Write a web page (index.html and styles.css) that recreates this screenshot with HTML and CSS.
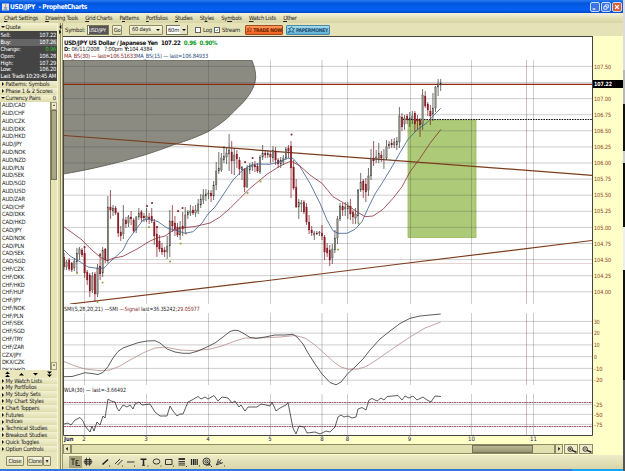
FILE: index.html
```
<!DOCTYPE html>
<html lang="en">
<head>
    <meta charset="UTF-8">
    <meta name="viewport" content="width=device-width, initial-scale=1.0">
    <title>USD/JPY - ProphetCharts</title>
    <link rel="stylesheet" href="styles.css">
</head>
<body>
    <div class="window">
        <div class="titlebar">
            <svg class="app-icon" viewBox="0 0 8 8"><rect width="8" height="8" fill="#e8e6e0"/><path d="M4.5 0.5C3 2 5 2.5 3.8 4" stroke="#c64" fill="none" stroke-width=".8"/><path d="M2 4.5h4M2.5 6h3.2M1.5 7.2h5" stroke="#446a96" stroke-width=".7"/></svg>
            <span class="title">USD/JPY&nbsp; - ProphetCharts</span>
            <div class="win-buttons">
                <span class="win-btn"><svg viewBox="0 0 10 10"><path d="M2 7.5h3.5" stroke="#fff" stroke-width="1.5"/></svg></span>
                <span class="win-btn"><svg viewBox="0 0 10 10"><path d="M4 4V2.3h4v3.5H6.5M2.2 4.5h4v3.3h-4z" stroke="#fff" fill="none"/></svg></span>
                <span class="win-btn close"><svg viewBox="0 0 10 10"><path d="M2.5 2.5l5 5M7.5 2.5l-5 5" stroke="#fff" stroke-width="1.4"/></svg></span>
            </div>
        </div>
        <div class="menubar">
            <span><u>C</u>hart Settings</span>
            <span><u>D</u>rawing Tools</span>
            <span><u>G</u>rid Charts</span>
            <span>P<u>a</u>tterns</span>
            <span><u>P</u>ortfolios</span>
            <span><u>S</u>tudies</span>
            <span>St<u>y</u>les</span>
            <span>Sy<u>m</u>bols</span>
            <span><u>W</u>atch Lists</span>
            <span><u>O</u>ther</span>
        </div>
        <div class="main">
            <div class="sidebar">
                <div class="head"><i class="down"></i>Quote</div>
                <div class="quote">
                    <div><span>Sell:</span><span>107.22</span></div>
                    <div class="alt"><span>Buy:</span><span>107.26</span></div>
                    <div><span>Change:</span><span class="up">0.96</span></div>
                    <div><span>Open:</span><span>106.28</span></div>
                    <div><span>High:</span><span>107.29</span></div>
                    <div><span>Low:</span><span>106.20</span></div>
                    <div><span>Last Trade</span><span>10:29:45 AM</span></div>
                </div>
                <div class="head"><i></i>Patterns: Symbols</div>
                <div class="head"><i></i>Phase 1 &amp; 2 Scores</div>
                <div class="head"><i class="down"></i>Currency Pairs<b>0</b></div>
                <div class="pairs">
                    <ul id="pairList"></ul>
                    <div class="vscroll">
                        <span class="arrow-btn"><svg viewBox="0 0 7 8"><path d="M1.5 5h4l-2-2.2z"/></svg></span>
                        <span class="thumb"></span>
                        <span class="rail"></span>
                        <span class="arrow-btn"><svg viewBox="0 0 7 8"><path d="M1.5 3h4l-2 2.2z"/></svg></span>
                    </div>
                </div>
                <div class="movers">
                    <svg viewBox="0 0 57 8"><path d="M5 4h5L7.5 1.5zM5 7h5L7.5 4.5zM19 5.5h5L21.5 3zM33 3h5l-2.5 2.5zM47 1.5h5L49.5 4zM47 4.5h5L49.5 7z"/></svg>
                </div>
                <div class="head low"><i></i>My Watch Lists</div>
                <div class="head low"><i></i>My Portfolios</div>
                <div class="head low"><i></i>My Study Sets</div>
                <div class="head low"><i></i>My Chart Styles</div>
                <div class="head low"><i></i>Chart Toppers</div>
                <div class="head low"><i></i>Futures</div>
                <div class="head low"><i></i>Indices</div>
                <div class="head low"><i></i>Technical Studies</div>
                <div class="head low"><i></i>Breakout Studies</div>
                <div class="head low"><i></i>Quick Toggles</div>
                <div class="head low"><i></i>Option Controls</div>
                <div class="side-buttons">
                    <span class="btn">Close</span>
                    <span class="btn clone">Clone</span><span class="btn drop">&#9662;</span>
                </div>
            </div>
            <div class="splitter">
                <svg viewBox="0 0 6 12"><path d="M4 1v5L1.5 3.5zM1.5 7v5L4 9.5z"/></svg>
            </div>
            <div class="content">
                <div class="toolbar">
                    <span class="lbl">Symbol:</span>
                    <span class="field symbol"><em>USD/JPY</em></span>
                    <span class="btn go">Go</span>
                    <span class="btn range">60 days <i></i></span>
                    <span class="field interval">60m <b><i></i></b></span>
                    <span class="check"></span><span class="log">Log</span>
                    <span class="check on"><svg viewBox="0 0 6 6"><path d="M1 3l1.5 1.5L5 1.3" stroke="#1d8a1d" fill="none"/></svg></span><span class="stream">Stream</span>
                    <span class="pill trade"><svg viewBox="0 0 8 8"><path d="M1 6.5L3.5 4 1.5 2.5h2L4.5.8l1 1.7h2L5.8 4.2l.7 2.3-2-1.3z"/></svg>TRADE NOW</span>
                    <span class="pill paper"><svg viewBox="0 0 8 8"><path d="M1 6.5L3.5 4 1.5 2.5h2L4.5.8l1 1.7h2L5.8 4.2l.7 2.3-2-1.3z"/></svg>PAPERMONEY</span>
                </div>
                <div class="chart-area">
                    <div class="legend">
                        <div class="name">USD/JPY US Dollar / Japanese Yen&nbsp; 107.22&nbsp; <span>0.96&nbsp; 0.90%</span></div>
                        <div class="date"><b>D:</b> 06/11/2008 &nbsp; 7:00pm <b>Y:</b>104.4384</div>
                        <div class="ma"><span class="red">MA_BS(30) — last=106.51633</span><span class="blue">MA_BS(15) — last=106.84933</span></div>
                    </div>
                    <svg id="chart" class="chart" viewBox="63 60 560 383">
                        <defs>
                            <clipPath id="pricePanel"><rect x="64" y="60" width="528" height="244"/></clipPath>
                        </defs>
                        <!-- axis strips -->
                        <rect x="592" y="60" width="31" height="383" fill="#ffffc8"/>
                        <rect x="63" y="436" width="560" height="7" fill="#ffffc8"/>
                        <path class="ellipse" clip-path="url(#pricePanel)" d="M60 60H251.7C254.5 66 255.7 72 255.7 77C255.5 86 250 95 241.7 104C234 111 229 117 225 120C219 125 214 128 208 131.7C197 137 186 141 175 144.3C165 148 156 151.5 146.3 154.5C131 159 115 163.5 100 166.7C88 169.5 76 172 60 174.5z"/>
                        <rect class="zone" x="408" y="120" width="68" height="117.5"/>
                        <g id="grid"></g>
                        <g clip-path="url(#pricePanel)">
                            <path class="faint" d="M64 263.5H592"/>
                            <path class="trend" d="M64 135.5L592 175.3M70 304L260 281.5L400 264L592 240.5"/>
                            <path class="last" d="M64 84.4H592"/>
                            <path class="support" d="M403 119.5H592"/>
                        </g>
                        <g id="candles"></g>
                        <g id="marks"></g>
                        <polyline id="ma15" class="ma15"/>
                        <polyline id="ma30" class="ma30"/>
                        <text x="64" y="311.3" textLength="54" lengthAdjust="spacingAndGlyphs" class="study">SMI(5,28,20,21) —SMI</text>
                        <text x="119.5" y="311.3" textLength="20" lengthAdjust="spacingAndGlyphs" class="study red">—Signal</text>
                        <text x="141" y="311.3" textLength="36" lengthAdjust="spacingAndGlyphs" class="study">last=36.35242;</text>
                        <text x="177.3" y="311.3" textLength="22.5" lengthAdjust="spacingAndGlyphs" class="study red">29.05977</text>
                        <polyline id="signal" class="signal"/>
                        <polyline id="smi" class="smi"/>
                        <text x="64" y="392.3" textLength="62" lengthAdjust="spacingAndGlyphs" class="study">WLR(30) — last=-3.66492</text>
                        <path class="bounds" d="M64 402.5H592M64 426.5H592"/>
                        <polyline id="wlr" class="smi"/>
                        <path class="frame" d="M63.5 60V435.5H592.5V60"/>
                        <rect x="593" y="80" width="30" height="8" fill="#000"/>
                        <text x="594" y="86.4" textLength="18" lengthAdjust="spacingAndGlyphs" class="price now">107.22</text>
                        <g id="labels"></g>
                    </svg>
                    <div class="hscroll">
                        <span class="arrow"><svg viewBox="0 0 8 10"><path d="M5 2.5v5L2.5 5z"/></svg></span>
                        <span class="track"><span class="thumb"></span></span>
                        <span class="arrow"><svg viewBox="0 0 8 10"><path d="M3 2.5v5L5.5 5z"/></svg></span>
                        <span class="zoom"><svg viewBox="0 0 15 10"><circle cx="5.5" cy="4.5" r="2.5"/><path d="M4.3 4.5h2.4M5.5 3.3v2.4"/><path d="M7.5 6l5 2" stroke-width="1.7"/></svg></span>
                        <span class="zoom"><svg viewBox="0 0 15 10"><circle cx="5.5" cy="4.5" r="2.5"/><path d="M4.3 4.5h2.4"/><path d="M7.5 6l5 2" stroke-width="1.7"/></svg></span>
                    </div>
                </div>
                <div class="drawbar">
                    <span class="tool grip"></span>
                    <span class="tool active"><svg viewBox="0 0 12 12"><path d="M2 3h4M4 3v6M7 4.5v5M7 4.5h2.5M7 7h2M7 9.5h4"/></svg></span>
                    <span class="tool"><svg viewBox="0 0 12 12"><path d="M3 3.5h6v4.5H3z" fill="#aaa78a"/><path d="M4.5 1.5v8.500M7.500 1.500v8.500M1.500 5.700h9" stroke-width=".7"/></svg></span>
                    <span class="tool gap"><svg viewBox="0 0 12 12"><path d="M2.5 8.5L8 3.5" stroke-width="1.6"/><path d="M9 10h1"/></svg></span>
                    <span class="tool"><svg viewBox="0 0 12 12"><path d="M2 8l5-5M4.5 9l5-5"/><path d="M9 10h1"/></svg></span>
                    <span class="tool"><svg viewBox="0 0 12 12"><path d="M2 6h7.5M9 10h1"/></svg></span>
                    <span class="tool"><svg viewBox="0 0 12 12"><path d="M2.5 3.2h6M5.5 3.2V9" stroke-width="1.5"/><path d="M4 9.3h3M9.5 10h1"/></svg></span>
                    <span class="tool"><svg viewBox="0 0 12 12"><ellipse cx="5.5" cy="5.5" rx="3.3" ry="2.6"/><path d="M9.5 10h1"/></svg></span>
                    <span class="tool"><svg viewBox="0 0 12 12"><path d="M2.5 3.5h6.5v5H2.5zM10 10h1"/></svg></span>
                    <span class="tool"><svg viewBox="0 0 12 12"><path d="M2.5 3h6.5" stroke-width="1.8"/><path d="M2.5 5.5h6.5M2.5 7.2h6.5M2.5 9h6.5M10 10.5h1"/></svg></span>
                    <span class="tool"><svg viewBox="0 0 12 12"><path d="M2.5 3v6M4.5 3v6M6.2 3v6M8.2 3v6M10 10h1" stroke-width="1.2"/></svg></span>
                    <span class="tool"><svg viewBox="0 0 12 12"><circle cx="5.5" cy="5.5" r="3.5"/><circle cx="5.5" cy="5.5" r="1.6"/><path d="M5.5 5.5l4 3.5H5M10 10.5h1"/></svg></span>
                    <span class="tool"><svg viewBox="0 0 12 12"><path d="M2.5 9l2-6M2.5 9L7.5 3.5M2.5 9l6.5-2.5M4.5 5.5l3 2M10 10h1" stroke-width=".8"/></svg></span>
                </div>
            </div>
        </div>
        <div class="taskbar"></div>
    </div>
    <div class="desktop"></div>
    <script src="script.js"></script>
</body>
</html>
```
FILE: styles.css
```
* {
    box-sizing: border-box;
}
body {
    margin: 0;
    width: 625px;
    height: 471px;
    overflow: hidden;
    display: flex;
    background: #ece9c8;
    font-family: "DejaVu Sans Condensed", "DejaVu Sans", sans-serif;
    font-stretch: condensed;
    font-size: 6.2px;
    color: #222;
}
svg {
    display: block;
}
.window {
    width: 623px;
    height: 471px;
    display: flex;
    flex-direction: column;
}
.desktop {
    width: 2px;
    background: linear-gradient(#dcdcdc 0 70px, #b8b8b8 70px 104px, #111 104px 151px, #ccc 151px 163px, #0c0c0c 163px 227px, #eee 227px 270px, #111 270px 380px, #555 380px);
}

/* title bar */
.titlebar {
    height: 13px;
    display: flex;
    align-items: center;
    padding: 0 1px 0 2px;
    background: linear-gradient(#2a7cf2, #0355dd 25%, #0560f5 75%, #0348c4);
    color: #fff;
}
.app-icon {
    width: 7px;
    height: 8px;
    margin-right: 1px;
}
.title {
    font-weight: bold;
    font-size: 6.7px;
    letter-spacing: -0.35px;
    white-space: nowrap;
}
.win-buttons {
    margin-left: auto;
    display: flex;
    gap: 1px;
}
.win-btn {
    width: 10px;
    height: 10px;
    border: 0.5px solid #c8dcff;
    border-radius: 2px;
    background: #3c74e4;
}
.win-btn.close {
    background: #dc5a38;
}

/* menu */
.menubar {
    height: 10px;
    display: flex;
    gap: 7.2px;
    padding: 1px 4px 0;
    line-height: 9px;
    white-space: nowrap;
    background: linear-gradient(#f4f2dc, #e4e1b8 50%, #d6d3a4);
    font-size: 5.9px;
    letter-spacing: -0.29px;
}
.menubar u {
    text-underline-offset: 0.5px;
    text-decoration-thickness: 0.5px;
}
.main {
    flex: 1;
    display: flex;
    min-height: 0;
}

/* left panel */
.sidebar {
    width: 57px;
    display: flex;
    flex-direction: column;
    background: #e9e6bc;
}
.head {
    height: 6.9px;
    line-height: 6.9px;
    display: flex;
    align-items: center;
    white-space: nowrap;
    font-size: 5.9px;
    letter-spacing: -0.22px;
    background: linear-gradient(#f3f1d2, #dfdcac);
}
.head:first-child {
    height: 8px;
}
.head.low {
    height: 6.8px;
}
.head i {
    width: 3px;
    margin: 0 1px 0 1.5px;
    border-left: 2.3px solid #111;
    border-top: 2px solid transparent;
    border-bottom: 2px solid transparent;
}
.head i.down {
    width: 4px;
    margin: 0 0.5px 0 1px;
    border-top: 2.5px solid #111;
    border-left: 2px solid transparent;
    border-right: 2px solid transparent;
    border-bottom: 0;
}
.head b {
    margin-left: auto;
    padding-right: 1px;
    font-weight: normal;
}
.quote {
    height: 50px;
    padding-top: 1px;
    background: #444;
    color: #fff;
}
.quote div {
    height: 6.9px;
    line-height: 6.9px;
    padding: 0 1px 0 0.5px;
    display: flex;
    justify-content: space-between;
    white-space: nowrap;
    font-size: 5.7px;
    letter-spacing: -0.2px;
}
.quote .alt {
    background: #666;
}
.quote .up {
    color: #2fc42f;
}
.pairs {
    height: 268.5px;
    display: flex;
    overflow: hidden;
    border-left: 1px solid #a5a286;
    background: #fff;
}
.pairs ul {
    flex: 1;
    margin: 0;
    padding: 0.5px 0 0 1px;
    list-style: none;
}
.pairs li {
    height: 7.8px;
    line-height: 7.8px;
    font-size: 5.8px;
    letter-spacing: -0.15px;
    white-space: nowrap;
}
.vscroll {
    width: 7px;
    display: flex;
    flex-direction: column;
    border-left: 0.5px solid #8a8760;
    background: #e8e5b5;
}
.arrow-btn {
    height: 8px;
    border: 0.5px solid #a5a27c;
    background: #f0edcc;
}
.vscroll .thumb {
    height: 70px;
    border: 0.5px solid #77745a;
    background: #a9a682;
}
.vscroll .rail {
    flex: 1;
}
.movers {
    height: 7.5px;
}
.movers svg {
    height: 8px;
}
.side-buttons {
    flex: 1;
    display: flex;
    align-items: center;
    padding: 0 5px 0 6px;
}
.btn {
    height: 10px;
    line-height: 9px;
    border: 0.5px solid #8d8a66;
    border-radius: 1px;
    background: linear-gradient(#f8f6e0, #e2dfb5);
    text-align: center;
    white-space: nowrap;
    font-size: 5.7px;
    letter-spacing: -0.2px;
}
.side-buttons .btn {
    width: 18px;
}
.side-buttons .clone {
    width: 16px;
    margin-left: 3px;
}
.side-buttons .drop {
    width: 8px;
}
.splitter {
    width: 6px;
    border-left: 1px solid #f8f6e0;
    border-right: 1px solid #99966c;
    background: linear-gradient(90deg, #dedbab 2px, #8e8b62 2px 2.7px, #eeebc4 2.7px);
}
.splitter svg {
    width: 5px;
    height: 12px;
}

/* toolbar */
.content {
    flex: 1;
    display: flex;
    flex-direction: column;
}
.toolbar {
    height: 13px;
    display: flex;
    align-items: center;
    padding-left: 2px;
    background: #e5e2b8;
    white-space: nowrap;
    font-size: 5.9px;
    letter-spacing: -0.2px;
}
.lbl {
    width: 22px;
}
.field {
    height: 10px;
    line-height: 8px;
    border: 0.5px solid #77745a;
    background: #fff;
    padding: 0.5px 1px;
}
.symbol {
    width: 22px;
    padding: 0.5px;
}
.symbol em {
    display: block;
    font-style: normal;
    font-size: 5.3px;
    letter-spacing: -0.2px;
    background: #555;
    color: #fff;
}
.go {
    width: 10px;
    margin-left: 3px;
}
.range {
    width: 34px;
    margin-left: 7px;
    padding: 0 2px;
    display: flex;
    align-items: center;
    justify-content: space-between;
}
.range i,
.interval i {
    border-top: 2.5px solid #111;
    border-left: 2px solid transparent;
    border-right: 2px solid transparent;
}
.interval {
    width: 22px;
    margin-left: 3px;
    display: flex;
    align-items: center;
    justify-content: space-between;
    padding-right: 0;
    font-size: 5.8px;
}
.interval b {
    width: 7px;
    height: 9px;
    display: flex;
    align-items: center;
    justify-content: center;
    background: #e8e5c0;
}
.check {
    width: 6px;
    height: 6px;
    margin: 0 2px 0 7px;
    border: 0.5px solid #666;
    background: #fff;
}
.log {
    width: 9px;
}
.check.on {
    margin-left: 2px;
}
.stream {
    width: 23px;
}
.pill {
    height: 10px;
    display: flex;
    align-items: center;
    border-radius: 1px;
    font-size: 5px;
    font-weight: bold;
    letter-spacing: -0.25px;
}
.pill svg {
    width: 8px;
    height: 8px;
    margin-right: 1px;
    fill: none;
    stroke: currentColor;
    stroke-width: 0.7;
}
.trade {
    width: 38px;
    border: 0.5px solid #a34a1c;
    background: linear-gradient(#ff9a5a, #f0601e);
    color: #6b2200;
}
.paper {
    width: 44px;
    margin-left: 3px;
    border: 0.5px solid #4a8aa8;
    background: linear-gradient(#a5dcee, #5fb0d4);
    color: #1d4e70;
}

/* chart */
.chart-area {
    width: 560px;
    height: 419px;
    display: flex;
    flex-direction: column;
    background: #ffffc8;
}
.legend {
    width: 530px;
    height: 24px;
    padding: 1.5px 0 0 1px;
    border: solid #444;
    border-width: 1px 1px 0 0;
    background: #fff;
    white-space: nowrap;
}
.legend div {
    height: 7.3px;
    line-height: 7.3px;
}
.legend .name {
    font-weight: bold;
    font-size: 6.1px;
    letter-spacing: -0.27px;
    color: #111;
}
.name span {
    color: #0d9a2a;
}
.legend .date {
    font-size: 5.7px;
    letter-spacing: -0.15px;
}
.legend .ma {
    font-size: 5.7px;
    letter-spacing: -0.2px;
}
.red {
    color: #8a1f1f;
}
.blue {
    color: #2c4c80;
}
.chart {
    width: 560px;
    height: 383px;
    background: #fff;
}
.ellipse {
    fill: #8b8b82;
    stroke: #55554c;
    stroke-width: 0.8;
}
.zone {
    fill: #adca78;
    stroke: #9bb95f;
    stroke-width: 0.8;
}
.grid {
    stroke: #404040;
    stroke-opacity: 0.29;
    stroke-width: 0.9;
    fill: none;
}
.session {
    stroke: #555;
    stroke-opacity: 0.17;
    stroke-width: 2;
}
.cursor {
    stroke: #a07080;
    stroke-opacity: 0.6;
    stroke-width: 0.8;
}
.faint {
    stroke: #c09090;
    stroke-opacity: 0.5;
    stroke-width: 0.8;
}
.trend {
    fill: none;
    stroke: #7c3c1c;
    stroke-width: 1.2;
}
.last {
    stroke: #8e2a14;
    stroke-width: 1.1;
}
.support {
    stroke: #111;
    stroke-width: 1.1;
    stroke-dasharray: 1.6 1;
}
.ma15,
.ma30,
.signal,
.smi {
    fill: none;
    stroke-width: 0.8;
    stroke-linejoin: round;
}
.ma15 {
    stroke: #3c5c90;
}
.ma30 {
    stroke: #8c3038;
}
.signal {
    stroke: #b88c8c;
}
.smi {
    stroke: #333;
}
.bounds {
    stroke: #803a50;
    stroke-width: 0.8;
    stroke-dasharray: 2 0.5;
}
.frame {
    fill: none;
    stroke: #444;
}
.study {
    font-size: 5.7px;
    fill: #222;
}
.study.red {
    fill: #8a1f1f;
}
.price {
    font-size: 5.8px;
    fill: #8a3a1c;
}
.price.now {
    fill: #fff;
    font-weight: bold;
}
.day {
    font-size: 6px;
    fill: #20206a;
    text-anchor: middle;
}
.month {
    font-weight: bold;
    text-anchor: start;
}

/* scroll bar under the chart */
.hscroll {
    height: 10px;
    margin-top: 1px;
    display: flex;
    width: 530px;
}
.arrow {
    width: 8px;
    border: 0.5px solid #8d8a66;
    background: #e8e5bc;
}
.track {
    flex: 1;
    display: flex;
    justify-content: flex-end;
    padding-right: 21px;
    border: 0.5px solid #8d8a66;
    background: #e3e0b0;
}
.track .thumb {
    width: 61px;
    border: 0.5px solid #77745a;
    background: linear-gradient(#bab796, #98956f);
}
.zoom {
    width: 14.5px;
    margin-left: 0.5px;
    border: 0.5px solid #8d8a66;
    background: #efecca;
}
.zoom svg {
    width: 14px;
    height: 9px;
    fill: none;
    stroke: #222;
    stroke-width: 1;
}

/* drawing tools */
.drawbar {
    flex: 1;
    display: flex;
    align-items: center;
    padding-left: 1px;
    background: linear-gradient(#eeebc9, #d9d6a8);
}
.tool {
    width: 12.7px;
    height: 12px;
}
.tool.grip {
    width: 5px;
    height: 10px;
    background: radial-gradient(#aaa780 0.6px, transparent 0.7px) 0 0 / 2px 2px;
}
.tool.active {
    background: #a5a27c;
}
.tool.gap {
    margin-left: 5.5px;
}
.tool svg {
    width: 12px;
    height: 12px;
    fill: none;
    stroke: #222;
    stroke-width: 0.9;
}
.taskbar {
    height: 2px;
    background: linear-gradient(90deg, #2f78dc 572px, #18a4ee 572px);
}
```
FILE: script.js
```
const NS = 'http://www.w3.org/2000/svg';

function add(parent, tag, attrs, text) {
    const el = document.createElementNS(NS, tag);
    for (const key in attrs) el.setAttribute(key, attrs[key]);
    if (text !== undefined) el.textContent = text;
    document.getElementById(parent).appendChild(el);
}

// symbol list
const pairs = {
    AUD: 'CAD CHF CZK DKK HKD JPY NOK NZD PLN SEK SGD USD ZAR',
    CAD: 'CHF DKK HKD JPY NOK PLN SEK SGD',
    CHF: 'CZK DKK HKD HUF JPY NOK PLN SEK SGD TRY ZAR',
    CZX: 'JPY',
    DKX: 'CZK HKD'
};
document.getElementById('pairList').innerHTML = Object.keys(pairs)
    .map(base => pairs[base].split(' ').map(q => `<li>${base}/${q}</li>`).join(''))
    .join('');

// grid: three panels share the same day lines
const panels = [[60, 304], [313, 385], [394, 435]];
const days = [84.5, 146.5, 208.5, 270.5, 347.5, 410.5, 471.5, 533.5];
panels.forEach(([top, bottom]) => {
    days.forEach(x => add('grid', 'path', { class: 'grid', d: `M${x} ${top}V${bottom}` }));
    add('grid', 'path', { class: 'session', d: `M322 ${top}V${bottom}` });
    add('grid', 'path', { class: 'cursor', d: `M526.5 ${top}V${bottom}` });
});

function level(y, label) {
    add('grid', 'path', { class: 'grid', d: `M64 ${y}H592` });
    if (label) add('labels', 'text', { class: 'price', x: 594, y: y + 2.1, textLength: label.length * 2.85, lengthAdjust: 'spacingAndGlyphs' }, label);
}
for (let i = 0; i <= 14; i++) {
    const price = (107.5 - i * 0.25).toFixed(2);
    level(66.4 + i * 16.1, price === '107.25' ? '' : price);
}
['30', '20', '10', '0', '-10', '-20'].forEach((t, i) => level(321.4 + i * 11.75, t));
['-25', '-50', '-75'].forEach((t, i) => level(404.4 + i * 10, t));

add('labels', 'text', { class: 'day month', x: 64, y: 440.8, textLength: 9.5, lengthAdjust: 'spacingAndGlyphs' }, 'Jun');
[[84, 2], [146, 3], [208, 4], [270, 5], [322, 8], [347.5, 8], [409.5, 9], [471.5, 10], [533.5, 11]]
    .forEach(([x, d]) => add('labels', 'text', { class: 'day', x: x, y: 440.8 }, d));

// hourly bars: high, low, open, close
const bars = [
    [253,270,257,267],[260,270,267,262],[258,271,260,269],[262,272,263,270],[258,271,268,261],[248,273,262,253],[247,260,254,249],[248,257,250,255],
    [247,278,253,273],[270,285,272,280],[273,297,275,291],[272,293,290,276],[272,302,274,294],[264,297,294,268],[253,280,266,274],[247,277,273,250],
    [248,263,249,260],[196,263,261,207],[190,219,207,210],[205,216,211,208],[206,215,208,213],[212,237,213,233],[226,241,232,236],[205,239,234,219],
    [217,228,220,224],[215,227,223,217],[211,225,217,219],[218,233,220,231],[216,233,230,217],[208,220,217,213],[210,222,212,218],[213,222,216,218],
    [208,222,219,216],[213,224,217,219],[208,223,216,221],[219,245,222,236],[226,257,234,247],[235,252,241,249],[243,255,248,252],[247,257,250,252],
    [236,259,252,246],[210,257,246,221],[205,232,221,226],[216,236,223,229],[223,237,227,235],[221,240,235,227],[212,236,226,229],[207,233,228,215],
    [210,219,215,212],[205,216,213,211],[206,215,210,213],[205,217,213,210],[199,214,211,204],[194,208,205,199],[189,204,200,195],[189,201,196,194],
    [190,199,194,193],[190,202,193,196],[181,200,196,185],[162,190,185,171],[152,174,171,168],[153,172,170,158],[146,163,160,156],[148,164,157,153],
    [134,171,154,150],[141,174,152,161],[148,175,161,155],[150,168,154,159],[157,175,160,169],[166,180,170,167],[168,192,169,187],[165,188,187,168],
    [163,174,170,166],[162,171,167,165],[161,172,165,167],[163,173,166,171],[155,174,172,157],[145,160,157,153],[150,158,153,155],[150,158,155,153],
    [151,163,154,157],[146,162,158,150],[147,165,151,160],[158,168,160,164],[157,168,164,160],[155,165,162,158],[147,160,158,149],[145,158,148,151],
    [141,198,146,168],[160,190,167,188],[179,208,187,207],[199,219,207,202],[200,212,204,203],[200,214,202,212],[203,225,207,222],[215,234,222,230],
    [226,236,230,233],[231,240,235,233],[231,235,233,234],[231,236,233,232],[225,240,233,236],[235,260,237,252],[243,257,248,253],[245,266,250,260],
    [244,264,258,249],[230,253,250,238],[216,244,238,219],[203,221,219,206],[203,216,206,210],[202,216,209,207],[202,219,209,206],[199,220,206,214],
    [210,224,212,217],[208,224,218,214],[189,223,216,190],[173,192,190,182],[179,198,181,190],[178,202,184,192],[168,196,190,176],[149,180,176,158],
    [141,166,158,161],[150,163,159,157],[143,163,160,153],[151,162,155,158],[149,169,160,159],[140,160,158,147],[141,149,146,144],[139,148,143,145],
    [138,148,145,142],[137,150,145,141],[107,148,142,116],[113,131,117,127],[115,130,124,118],[114,124,116,120],[112,127,120,118],[111,124,119,116],
    [111,132,113,124],[115,130,119,121],[118,137,120,125],[89,130,124,95],[91,108,96,106],[102,116,104,110],[105,125,111,116],[93,121,114,108],
    [86,112,108,87],[79,96,87,84],[79,91,85,83]
];
bars.forEach(([high, low, open, close], i) => {
    const x = 64 + i * 2.58;
    const down = close > open;
    const color = down ? '#7c1620' : '#33332e';
    add('candles', 'path', { d: `M${x} ${high}V${low}`, stroke: color, 'stroke-width': 0.7 });
    add('candles', 'rect', {
        x: x - 0.75, y: Math.min(open, close), width: 1.5, height: Math.max(1, Math.abs(close - open)),
        fill: down ? '#8c1a22' : '#8a8a80', stroke: color, 'stroke-width': 0.25
    });
});

// pivot marks
[[84.5, 247], [147, 206], [152, 203], [157, 227], [178, 211], [182.5, 208], [245, 162], [252.5, 158], [291.5, 134.5], [100, 255]]
    .forEach(([x, y]) => add('marks', 'rect', { x: x - 0.8, y: y - 0.8, width: 1.7, height: 1.7, fill: '#7c1620' }));
[[77, 273], [102.5, 282.5], [97.5, 302], [149, 227], [170, 261.5], [180.5, 243.5], [186, 233.5], [247.5, 193], [260.5, 181.5], [338, 249.5], [358.5, 223.5]]
    .forEach(([x, y]) => add('marks', 'rect', { x: x - 0.8, y: y - 0.8, width: 1.7, height: 1.7, fill: '#86a030' }));

const lines = {
    ma15: '64,250 70,256 80,261.7 88,267 97,268.3 104,268 110,261.7 117,255.7 123,250 128,240 137,228 143,220 150,219 158,221.7 167,228 175,230 185,233.3 193,231.7 202,223 208,214 215,207 223,195 233,180 242,170.7 250,165.5 257,164 270,164.3 280,161.7 287,158.3 293,158.3 300,166.7 310,183.3 320,203.3 327,220 333,230.7 338,233.3 347,233.3 355,229.3 362,221.7 368,208.3 375,194 383,181.7 392,166.7 400,152.7 408,139.3 417,130 427,122.7 434,115 440.7,108.3',
    ma30: '64,227 73,233.3 82,240 90,248.3 100,257 107,260.7 113,258.3 123,256.3 137,249 150,241 157,238 165,236 172,231 180,228 195,226.5 210,223 220,217 230,208.3 240,198.3 250,188.3 267,174.3 280,166 291,161 300,166 310,175 322,183.3 333,196.7 347,205 357,211.7 365,216.7 373,216 383,209.3 393,198.3 402,186.7 410,171.7 420,158.3 430,143.3 441,129.3',
    smi: '64,376.7 72,376.5 79,374.5 85,372.7 92,373.5 98,374.5 103,372.5 108,366.5 113,358 118,351.5 123,348 130,345.5 138,342.7 147,341 155,340.7 160,343 167,349 175,352 183,353.3 190,353.3 198,351 208,346.5 215,343 223,337 230,331.5 234,330.3 238,330.5 243,333 250,337.5 256,338.3 265,337 275,335 285,335 293,334.3 297,337 303,344 308,353 315,364 322,374 330,382.5 336,384.8 341,382 348,373.3 355,367 363,359 370,350 380,339 390,331 400,323.5 410,318.3 420,316 430,315 440.7,314',
    signal: '64,361.5 75,366 85,369 100,370.7 110,370 120,366 130,360 145,352 155,348 165,347 180,350 195,350.7 210,349 222,346 235,341 245,338 260,338 280,337 295,335.5 305,338 315,345 325,354 335,363 341,367 348,369.2 358,369 366,366.5 378,359 395,347 410,337 425,328 440.7,322',
    wlr: '64,424 68,423 71,425 75,420 80,417.5 83,421 85,426 90,432 92,426 94,431 97,422 100,425 103,416 105,418 108,399 111,401 115,402 117,408 119,411 123,405 127,407 130,405 133,409 135,404 139,402 142,405 150,404 155,412 160,416 167,416 170,406 173,411 177,416 180,414 183,414 188,402 192,400 198,396.5 201,399 205,397 208,399 214,395.5 218,401 222,397 228,398 232,403 235,401 239,407 241,405 245,411 248,407 257,407 261,404 266,405 270,406 272,402 276,411 280,408 286,405 288,402.5 291,418 293,428 296,434 299,426 304,427 307,433 315,432 320,434 326,431 330,432 335,427 338,417 341,415 344,417 348,416 352,418 356,417 358,409 362,407.5 366,410 369,400 372,398.5 377,401 381,398 384,400 387,396.5 398,395.5 402,400 405,396 409,398 413,396 417,400 423,397 427,400 431,402 435,396 441,396.5'
};
for (const id in lines) document.getElementById(id).setAttribute('points', lines[id]);
```
